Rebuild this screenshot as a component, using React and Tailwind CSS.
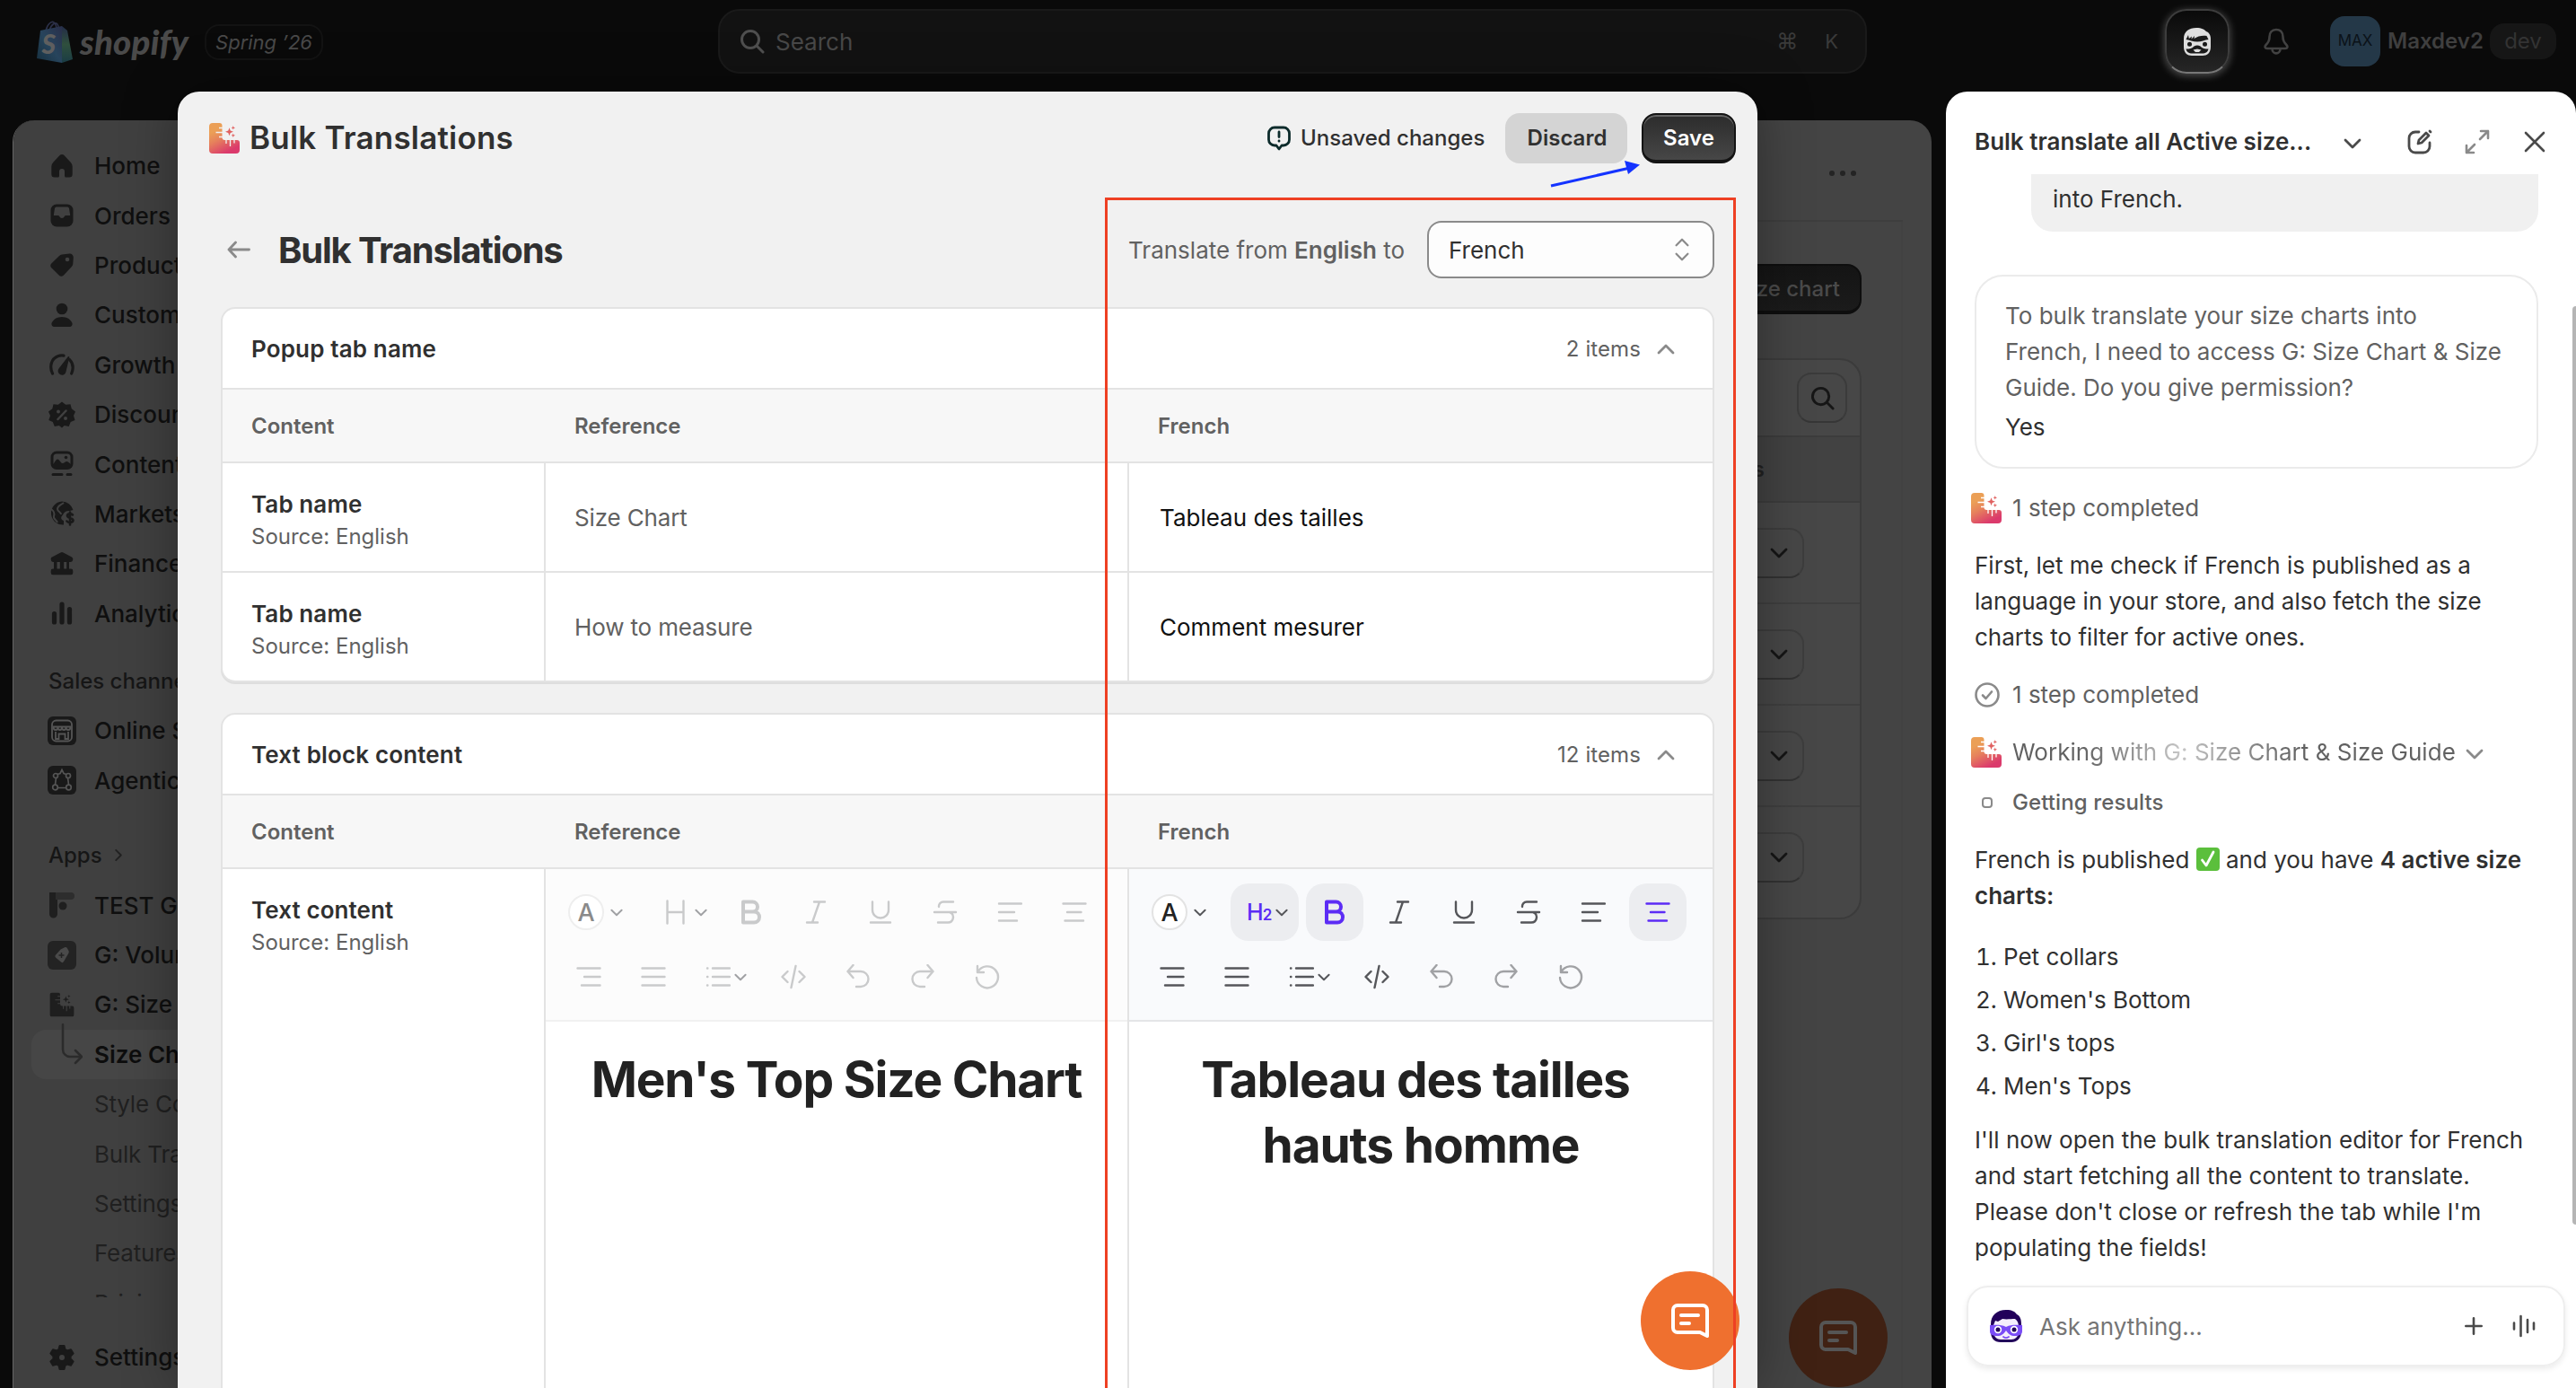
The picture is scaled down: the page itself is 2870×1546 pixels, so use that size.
import React from 'react';

const navItems = [
  { label: 'Home', icon: 'home' },
  { label: 'Orders', icon: 'orders' },
  { label: 'Products', icon: 'tag' },
  { label: 'Customers', icon: 'person' },
  { label: 'Growth', icon: 'gauge' },
  { label: 'Discounts', icon: 'discount' },
  { label: 'Content', icon: 'content' },
  { label: 'Markets', icon: 'globe' },
  { label: 'Finance', icon: 'bank' },
  { label: 'Analytics', icon: 'bars' },
];

const subItems = ['Style Config', 'Bulk Translations', 'Settings', 'Features', 'Pricing'];

const tabRows = [
  { reference: 'Size Chart', french: 'Tableau des tailles' },
  { reference: 'How to measure', french: 'Comment mesurer' },
];

const charts = ['Pet collars', "Women's Bottom", "Girl's tops", "Men's Tops"];

const NavIcon = ({ name }) => {
  const fill = '#191919';
  const bg = '#404040';
  return (
    <svg viewBox="0 0 32 32" className="w-8 h-8 shrink-0">
      {name === 'home' && (
        <path fill={fill} d="M16 3c-1 0-2 .4-2.700 1.200l-7 7.500A7 7 0 0 0 4.300 16.500V25a3.500 3.500 0 0 0 3.500 3.500H11.500a1.500 1.500 0 0 0 1.500-1.500v-5a3 3 0 0 1 6 0v5a1.500 1.500 0 0 0 1.500 1.500h3.700a3.500 3.500 0 0 0 3.500-3.500v-8.500a7 7 0 0 0-2-4.800l-7-7.500A3.700 3.700 0 0 0 16 3z" />
      )}
      {name === 'orders' && (
        <>
          <rect x="3.500" y="3.500" width="25" height="25" rx="6.500" fill={fill} />
          <path fill={bg} d="M10 6.500h12a2 2 0 0 1 2 1.500l1.200 8h-4.700a2 2 0 0 0-1.800 1.200 3 3 0 0 1-5.400 0A2 2 0 0 0 11.500 16H6.800L8 8a2 2 0 0 1 2-1.500z" />
        </>
      )}
      {name === 'tag' && (
        <>
          <path fill={fill} d="M16 4.500 24.500 3.500a4 4 0 0 1 4.300 4.200L28.300 15a5 5 0 0 1-1.400 3L18 27.500a3.800 3.800 0 0 1-5.400 0L4.500 19.500a3.800 3.800 0 0 1 0-5.300L13 6a5 5 0 0 1 3-1.500z" />
          <circle cx="22" cy="10" r="2.300" fill={bg} />
        </>
      )}
      {name === 'person' && (
        <>
          <circle cx="16" cy="9" r="6.300" fill={fill} />
          <path fill={fill} d="M16 18c-5.500 0-9.500 2.800-11.300 6.500C3.700 26.600 5.200 29 7.500 29h17c2.300 0 3.800-2.400 2.800-4.500C25.500 20.800 21.500 18 16 18z" />
        </>
      )}
      {name === 'gauge' && (
        <>
          <path fill="none" stroke={fill} strokeWidth="3.200" strokeLinecap="round" d="M5.500 26C2 19 3.500 9.500 12 6.500c2-.7 4-.8 6-.4M24.500 10.500c4 4.200 4.500 10 2.200 15.500" />
          <path fill={fill} d="M22.500 7.500c.5-1 2-.6 1.800.6L20.500 24a4.500 4.500 0 1 1-8-3.500z" />
        </>
      )}
      {name === 'discount' && (
        <>
          <path fill={fill} d="M16 1.500l4.200 3.200 5.300-.4 1.300 5L31 12.500 29 17l1.500 5-4.800 2-2 5-5-1L16 30.500 12.800 28l-5 1-2-5-4.500-2L3 17 1 12.500l4.300-3.200 1.200-5 5.300.4z" />
          <path stroke={bg} strokeWidth="2.500" strokeLinecap="round" d="M20.500 11.500l-9 9.500" />
          <circle cx="12" cy="12.500" r="2" fill={bg} />
          <circle cx="20" cy="20" r="2" fill={bg} />
        </>
      )}
      {name === 'content' && (
        <>
          <rect x="5" y="3" width="22" height="17.500" rx="5" fill="none" stroke={fill} strokeWidth="3" />
          <path fill={fill} d="M5 17c3-2 4-6.500 6-6.500 2.500 0 3.500 4.500 5.500 4.500s3-2 5-2 4 3 5.500 4v3H6z" />
          <circle cx="20.500" cy="8.500" r="1.800" fill={fill} />
          <path stroke={fill} strokeWidth="3" strokeLinecap="round" d="M6 27.500h10M22 27.500h4" />
        </>
      )}
      {name === 'globe' && (
        <>
          <path fill={fill} d="M16 2.500A13 13 0 1 0 18 28.500V24c-3-1-4-4-1-6.500 1-3 4-5 8-4.500l3.500-1A13 13 0 0 0 16 2.500z" />
          <path fill="none" stroke={bg} strokeWidth="2" d="M18 4c-4 3-7 3-7 7 0 3 4 3 4 6M4 11c3 2 4 5 3 8s3 4 4 7" />
          <path fill="none" stroke={fill} strokeWidth="2.600" strokeLinecap="round" d="M28 17.500c-1-1.500-6-1.800-6 1s6.500 2 6.500 5-6 3-7 1M25 14.500v14" />
        </>
      )}
      {name === 'bank' && (
        <path fill={fill} d="M14.500 3.500a3 3 0 0 1 3 0l9.500 5a2.500 2.500 0 0 1 1.300 2.200c0 2-1.300 3.300-3 3.300H24v7.500h2a2.300 2.300 0 0 1 2.300 2.300V26a2.300 2.300 0 0 1-2.300 2.300H6A2.300 2.300 0 0 1 3.700 26v-2.200A2.300 2.300 0 0 1 6 21.500h1V14h-.5c-1.700 0-2.800-1.300-2.800-3.300 0-1 .4-1.800 1.300-2.200zM10.500 14v7.500h3.300V14zm7.700 0v7.500h3V14z" />
      )}
      {name === 'bars' && (
        <path stroke={fill} strokeWidth="5.200" strokeLinecap="round" d="M7.500 16.500v9.500M16 6v20M24.500 11.500v14.500" />
      )}
      {name === 'store' && (
        <>
          <rect x="0" y="0" width="32" height="32" rx="6" fill={fill} />
          <rect x="5" y="4.500" width="22" height="23" rx="4.500" fill="none" stroke="#555" strokeWidth="1.800" />
          <path fill="none" stroke="#555" strokeWidth="1.800" d="M6 11.500h20M6.500 12c0 4 5 4 5 0 0 4 4.500 4 4.500 0 0 4 4.500 4 4.500 0 0 4 5 4 5 0M9 17v8h3.500v-5.500h7V25H23v-8" />
        </>
      )}
      {name === 'agent' && (
        <>
          <rect x="0" y="0" width="32" height="32" rx="6" fill={fill} />
          <path fill="none" stroke="#555" strokeWidth="1.700" d="M11 9.500l3-1 2-4 2 4 3 1M9.500 13l-1 8M22.500 13l1 8M11 24.500h10" />
          <g fill={fill} stroke="#555" strokeWidth="1.700">
            <circle cx="9" cy="11" r="2.500" />
            <circle cx="23" cy="11" r="2.500" />
            <circle cx="8.500" cy="24" r="2.800" />
            <circle cx="23.500" cy="24" r="2.800" />
          </g>
        </>
      )}
      {name === 'test' && (
        <>
          <path fill="#1f1f1f" d="M2 2h9v24a4 4 0 0 1-9 0z" />
          <path fill="#2d2d2d" d="M9 2h17a4 4 0 0 1 0 8H9z" />
          <circle cx="17" cy="17" r="4.500" fill="#1f1f1f" />
        </>
      )}
      {name === 'volume' && (
        <>
          <rect x="0" y="0" width="32" height="32" rx="6" fill="#232323" />
          <path fill="#4a4a4a" d="M14.500 9.500l5-2.500a2 2 0 0 1 2 .5l2 3.500a3 3 0 0 1 0 2.500L18 23a2 2 0 0 1-3 .5l-6-5a2 2 0 0 1-.3-2.500z" />
          <path stroke="#232323" strokeWidth="1.500" d="M15.500 13v6M12.500 16h6" />
        </>
      )}
      {name === 'gear' && (
        <>
          <path fill={fill} d="M13.500 3h5l1 4 2.500 1.400 4-1.200 2.600 4.400-3 3v2.800l3 3-2.600 4.400-4-1.200L19.500 25l-1 4h-5l-1-4L10 23.600l-4 1.200-2.600-4.400 3-3v-2.800l-3-3L6 7.200l4 1.200L12.500 7z" stroke={fill} strokeWidth="2" strokeLinejoin="round" />
          <circle cx="16" cy="16" r="3" fill={bg} />
        </>
      )}
    </svg>
  );
};

const AppIcon = ({ dim, tick = '#fff' }) => (
  <svg viewBox="0 0 34 34" className="w-[34px] h-[34px] shrink-0">
    <defs>
      <linearGradient id="appGrad" x1="0.300" y1="0.200" x2="0.700" y2="1">
        <stop offset="0" stopColor="#eb9f56" />
        <stop offset="0.350" stopColor="#e6815c" />
        <stop offset="0.900" stopColor="#db3a6c" />
      </linearGradient>
    </defs>
    <path
      fill={dim ? '#1e1e1e' : 'url(#appGrad)'}
      d="M4 0h7.500A3 3 0 0 1 14.500 3V16a3 3 0 0 0 3 3H31a3 3 0 0 1 3 3v8a4 4 0 0 1-4 4H4a4 4 0 0 1-4-4V4a4 4 0 0 1 4-4z"
    />
    <path stroke={tick} strokeWidth="1.300" d="M11 5.500h5M7.500 10.500h8M11 15.500h4M19 18v5M23.500 18v8M28 18v4.500" />
    <path
      fill={dim ? '#1e1e1e' : '#e0605f'}
      d="M22.500 5.200l1.200 3.300 3.300 1.200-3.300 1.200-1.200 3.300-1.200-3.300L18 9.700l3.300-1.200zM26.800 3l.6 1.700 1.700.6-1.700.6-.6 1.700-.6-1.700-1.700-.6 1.700-.6zM26.800 11.500l.6 1.700 1.700.6-1.700.6-.6 1.700-.6-1.700-1.700-.6 1.700-.6z"
    />
  </svg>
);

const Chevron = ({ dir = 'down', className }) => (
  <svg viewBox="0 0 20 12" className={className} fill="none" stroke="currentColor" strokeWidth="2.800" strokeLinecap="round" strokeLinejoin="round">
    <path d={dir === 'up' ? 'M2 10l8-8 8 8' : 'M2 2l8 8 8-8'} />
  </svg>
);

const SearchIcon = ({ className }) => (
  <svg viewBox="0 0 28 28" className={className} fill="none" stroke="currentColor" strokeWidth="3" strokeLinecap="round">
    <circle cx="12" cy="12" r="9.500" />
    <path d="M19 19l7 7" />
  </svg>
);

const ChatBubbleIcon = () => (
  <svg viewBox="0 0 44 40" className="w-11 h-10" fill="none" stroke="currentColor" strokeWidth="4" strokeLinejoin="round" strokeLinecap="round">
    <path d="M41 37V8a5 5 0 0 0-5-5H8a5 5 0 0 0-5 5v20a5 5 0 0 0 5 5h25z" />
    <path d="M12 14h19M12 23h9" />
  </svg>
);

const ToolIcon = ({ name }) => {
  const paths = {
    bold: 'M5 2.500h10.500a5.500 5.500 0 0 1 0 11H5zM5 13.500h12a6 6 0 0 1 0 12H5z',
    italic: 'M12 2.500h12M4 25.500h12M18 2.500L10 25.500',
    underline: 'M5 2.500v9a9 9 0 0 0 18 0v-9M3 25.500h22',
    strike: 'M23 2.500H12a5 5 0 0 0-5 5.500M2 14h24M19 14c6 2 5 11.500-2 11.500H6',
    left: 'M2 4.500h25M2 14h17M2 23.500h20',
    center: 'M1.500 4.500h25M6 14h15.500M3.500 23.500h20.500',
    right: 'M1.500 4.500h25M9 14h17.500M6 23.500h20.500',
    justify: 'M1.500 4.500h25M1.500 14h25M1.500 23.500h25',
    list: 'M8 4.500h19M8 14h19M8 23.500h19M2 4.500h.4M2 14h.4M2 23.500h.4',
    code: 'M7.500 8l-6 6 6 6M20.500 8l6 6-6 6M16.500 2L11.500 26',
    undo: 'M8.500 1L2.500 8l6 7M2.500 8h14.500a8.500 8.500 0 0 1 0 17H12',
    redo: 'M19.500 1l6 7-6 7M25.500 8H11a8.500 8.500 0 0 0 0 17h5',
    reset: 'M3 2v7h7M3.500 8.500A12 12 0 1 1 2 15',
    heading: 'M4.500 1.500v25M22.500 1.500v25M4.500 14h18',
  };
  return (
    <svg viewBox="0 0 28 28" className="w-7 h-7" fill="none" stroke="currentColor" strokeWidth={name === 'bold' ? 4 : 2.400} strokeLinecap="round" strokeLinejoin="round">
      <path d={paths[name]} />
    </svg>
  );
};

const ToolButton = ({ name, active, faded }) => (
  <div
    className={`w-16 h-16 rounded-[20px] flex items-center justify-center ${active ? 'bg-[#ecedf0] text-[#5c2cf5]' : ''} ${faded ? 'text-[#a0a1a4]' : ''}`}
  >
    <ToolIcon name={name} />
  </div>
);

const Toolbar = ({ active }) => (
  <div
    className={`h-[170px] border-b-2 p-4 flex flex-col gap-2 ${
      active ? 'bg-[#f9fafc] border-[#e4e5e7] text-[#55565a]' : 'bg-[#fcfcfc] border-[#f1f1f1] text-[#c9cacb]'
    }`}
  >
    <div className="flex gap-2">
      <div className="w-[89px] h-16 pl-[9px] flex items-center gap-[7px]">
        <div className={`w-10 h-10 rounded-full border-2 bg-white flex items-center justify-center font-medium text-[27px] leading-none ${active ? 'border-[#e3e3e3] text-[#222]' : 'border-[#eee] text-[#8a8a8a]'}`}>
          A
        </div>
        <Chevron className={active ? 'w-[14px] h-[9px] text-[#55565a]' : 'w-[14px] h-[9px] text-[#a0a1a4]'} />
      </div>
      {active ? (
        <div className="w-[76px] h-16 rounded-[20px] bg-[#ecedf0] text-[#5c2cf5] flex items-center pl-[18px]">
          <span className="text-[25px] font-medium leading-none tracking-[-1px]">H</span>
          <span className="text-[17px] font-semibold leading-none pt-[6px]">2</span>
          <Chevron className="w-[14px] h-[9px] ml-[4px] text-[#55565a]" />
        </div>
      ) : (
        <div className="w-[76px] h-16 flex items-center pl-[18px] gap-[7px]">
          <ToolIcon name="heading" />
          <Chevron className="w-[14px] h-[9px] text-[#a0a1a4]" />
        </div>
      )}
      <ToolButton name="bold" active={active} />
      <ToolButton name="italic" />
      <ToolButton name="underline" />
      <ToolButton name="strike" />
      <ToolButton name="left" />
      <ToolButton name="center" active={active} />
    </div>
    <div className="flex gap-2">
      <ToolButton name="right" />
      <ToolButton name="justify" />
      <div className="w-[76px] h-16 flex items-center gap-1 pl-[18px]">
        <ToolIcon name="list" />
        <Chevron className={active ? 'w-[14px] h-[9px]' : 'w-[14px] h-[9px] text-[#a0a1a4]'} />
      </div>
      <ToolButton name="code" />
      <ToolButton name="undo" faded={active} />
      <ToolButton name="redo" faded={active} />
      <ToolButton name="reset" faded={active} />
    </div>
  </div>
);

const NavRow = ({ icon, label, children }) => (
  <div className="h-[55.400px] shrink-0 flex items-center pl-[18px] gap-5 text-[26px] font-medium text-[#0f0f0f] whitespace-nowrap">
    {children || <NavIcon name={icon} />}
    {label}
  </div>
);

const Sidebar = () => (
  <div className="w-[480px] shrink-0 bg-[#404040] px-5 flex flex-col">
    <div className="h-[1311px] pt-[23px] overflow-hidden">
      {navItems.map((item) => (
        <NavRow key={item.label} icon={item.icon} label={item.label} />
      ))}
      <div className="h-[55.400px] mt-5 pl-[19px] flex items-center text-[24px] font-medium text-[#161616]">Sales channels</div>
      <NavRow icon="store" label="Online Store" />
      <NavRow icon="agent" label="Agentic" />
      <div className="h-[55.400px] mt-7 pl-[19px] flex items-center gap-[11px] text-[24px] font-medium text-[#161616]">
        Apps
        <Chevron className="w-[14px] h-[9px] -rotate-90 text-[#222]" />
      </div>
      <NavRow icon="test" label="TEST G" />
      <NavRow icon="volume" label="G: Volume Discount" />
      <NavRow label="G: Size Chart">
        <span className="w-8 flex justify-center">
          <span className="scale-[0.8]"><AppIcon dim tick="#404040" /></span>
        </span>
      </NavRow>
      <div className="h-[55.400px] bg-[#464646] rounded-2xl flex items-center text-[26px] font-semibold text-[#0d0d0d] pl-[33px] gap-[13px]">
        <svg viewBox="0 0 24 46" className="w-6 h-[46px] -mt-[25px] -mb-[2px]" fill="none" stroke="#2b2b2b" strokeWidth="2.500" strokeLinecap="round" strokeLinejoin="round">
          <path d="M2 1v28a8 8 0 0 0 8 8h12M16 30l7 7-7 7" />
        </svg>
        Size Chart
      </div>
      {subItems.map((label) => (
        <div key={label} className="h-[55.400px] pl-[70px] flex items-center text-[26px] tracking-[-0.200px] text-[#202020] whitespace-nowrap">
          {label}
        </div>
      ))}
    </div>
    <div className="pt-[39px]">
      <NavRow icon="gear" label="Settings" />
    </div>
  </div>
);

const TopBar = () => (
  <div className="h-[134px] shrink-0 flex items-start">
    <div className="flex items-center h-[92px] pl-[41px] w-[800px]">
      <svg viewBox="0 0 40 47" className="w-10 h-[47px]">
        <defs>
          <linearGradient id="bag" x1="0" y1="1" x2="1" y2="0">
            <stop offset="0" stopColor="#16303f" />
            <stop offset="0.500" stopColor="#27445c" />
            <stop offset="1" stopColor="#2a2f4a" />
          </linearGradient>
          <linearGradient id="bagSide" x1="0" y1="0" x2="0" y2="1">
            <stop offset="0" stopColor="#232c48" />
            <stop offset="0.500" stopColor="#2f4f3d" />
            <stop offset="1" stopColor="#1a3c45" />
          </linearGradient>
        </defs>
        <path fill="none" stroke="#2c3048" strokeWidth="1.600" d="M10 11C12 3 17 0 19 2c2 1.500 3 5 3 8M14 11c2-7 7-10 9-7 1.500 2 1.500 4 1.500 6" />
        <path fill="url(#bag)" d="M4 11l24-5v41L0 42z" />
        <path fill="url(#bagSide)" d="M28 6l6 5 6 32-12 4z" />
        <text x="5.500" y="37" fontSize="30" fontWeight="900" fontStyle="italic" fontFamily="Lato, sans-serif" fill="#5f5f5f">S</text>
      </svg>
      <div className="ml-2 w-[123px] text-[38.500px] leading-[46px] font-black italic text-[#4a4a4a] font-[Lato,sans-serif] tracking-[0.200px]">shopify</div>
      <div className="ml-[16px] mt-[2px] w-[132px] h-10 rounded-[16px] border-2 border-[#131313] flex items-center justify-center italic text-[22px] text-[#494949]">
        Spring ’26
      </div>
    </div>
    <div className="w-[1280px] h-[72px] mt-[10px] rounded-[24px] bg-[#121212] border-2 border-[#1a1a1a] flex items-center pl-[22px] pr-[30px] text-[26px] text-[#484848]">
      <SearchIcon className="w-7 h-7 text-[#4f4f4f]" />
      <span className="ml-[12px] flex-1">Search</span>
      <span className="text-[24px] text-[#3a3a3a]">⌘</span>
      <span className="text-[22px] text-[#3a3a3a] ml-[30px]">K</span>
    </div>
    <div className="flex-1 flex items-center h-[92px] pl-[332px]">
      <div className="w-[72px] h-[72px] rounded-[24px] border-2 border-[#3d3d3d] border-b-[#777] bg-linear-to-b from-[#0a0a0a] to-[#262626] flex items-center justify-center shadow-[0_2px_10px_rgba(255,255,255,0.300)]">
        <svg viewBox="0 0 30 31" className="w-[30px] h-[31px]">
          <path fill="#dedede" d="M0 12C0 4 6 0 14 0c6 0 9 2 11 4 3 1 5 4 5 8v9c0 7-4 10-9 10H9c-5 0-9-3-9-10z" />
          <path fill="#1a1a1a" d="M2.500 13l2.500-5 .8 4L9 9.500l-.5 3L12 9l-.5 3c4-3 10-4 14-3l2 4c-4 .5-8 2.500-12.500 2.500S6 13.500 2.500 13z" />
          <path fill="#1a1a1a" d="M2.500 23.500c4 0 7-.5 9-3 2.500-1.300 4.500-1.300 7 0 2 2.500 5 3 9 3-.5 3-3 5-7 5h-11c-4 0-6.500-2-7-5z" />
          <circle cx="6.500" cy="18.300" r="2.500" fill="#1a1a1a" />
          <circle cx="23.500" cy="18.300" r="2.500" fill="#1a1a1a" />
          <path fill="#dedede" d="M10.500 24.500l4.500-1 4.500 1-2.500 2.500h-4z" />
        </svg>
      </div>
      <svg viewBox="0 0 28 30" className="w-7 h-[30px] ml-[38px]" fill="none" stroke="#424242" strokeWidth="2.600" strokeLinejoin="round">
        <path d="M14 2C9 2 6.500 5.500 6.500 10c0 4-1 6-3.500 8.500C.5 21 1.500 23 4 23h20c2.500 0 3.500-2 1-4.500C22.500 16 21.500 14 21.500 10 21.500 5.500 19 2 14 2zM9.500 23.500c0 6.500 9 6.500 9 0" />
      </svg>
      <div className="ml-[46px] shrink-0 w-14 h-14 rounded-2xl bg-[#243848] text-[#0b1218] text-[17px] flex items-center justify-center">MAX</div>
      <div className="ml-[8px] shrink-0 text-[24px] font-semibold text-[#3f3f3f] w-[108px]">Maxdev2</div>
      <div className="ml-[6px] shrink-0 w-[74px] h-10 rounded-2xl bg-[#161616] text-[#333] text-[24px] flex items-center justify-center">dev</div>
    </div>
  </div>
);

const PageBehind = () => (
  <div className="flex-1 bg-[#444]">
    <div className="mr-8 h-[113px] border-b-2 border-[#3e3e3e] flex items-center justify-end gap-[6px] pr-[52px] pt-[6px]">
      <span className="w-[6px] h-[6px] rounded-full bg-[#242424]" />
      <span className="w-[6px] h-[6px] rounded-full bg-[#242424]" />
      <span className="w-[6px] h-[6px] rounded-full bg-[#242424]" />
    </div>
    <div className="mr-8 border-r-2 border-[#424242] pr-[44px] pt-[47px] h-full">
      <div className="flex justify-end">
        <div className="h-14 w-[260px] rounded-2xl border-2 border-[#0e0e0e] border-b-4 bg-linear-to-b from-[#141414] to-[#1b1b1b] flex items-center justify-end pr-[22px] pt-[2px] text-[24px] font-medium text-[#4a4a4a]">
          Create size chart
        </div>
      </div>
      <div className="mt-[49px] rounded-[24px] border-2 border-[#3b3b3b] bg-[#474747]">
        <div className="h-[84px] flex items-center justify-end pr-[14px]">
          <div className="w-14 h-14 rounded-2xl border-2 border-[#3b3b3b] border-b-[#363636] flex items-center justify-center text-[#161616]">
            <SearchIcon className="w-[27px] h-[27px]" />
          </div>
        </div>
        <div className="h-[75px] border-y-2 border-[#3c3c3c] bg-[#424242] flex items-center justify-end pr-[106px] text-[24px] font-semibold text-[#222]">
          Actions
        </div>
        {[0, 1, 2, 3].map((row) => (
          <div key={row} className={row < 3 ? 'h-[113px] border-b-2 border-[#3f3f3f] flex items-center justify-end pr-[62px]' : 'h-[123px] flex items-start pt-[28px] justify-end pr-[62px]'}>
            <div className="w-[160px] h-14 rounded-2xl border-2 border-[#3d3d3d] border-b-[#323232] flex items-center justify-end pr-[16px] text-[#151515]">
              <Chevron className="w-5 h-3" />
            </div>
          </div>
        ))}
      </div>
    </div>
  </div>
);

const CardHeader = ({ title, count }) => (
  <>
    <div className="h-[90px] border-b-2 border-[#e3e3e3] flex items-center justify-between pl-8 pr-[42px]">
      <h3 className="text-[26px] font-semibold text-[#303030] tracking-[0.150px]">{title}</h3>
      <div className="flex items-center text-[24px] text-[#616161] gap-[18px] pt-px tracking-[0.100px]">
        {count} items
        <Chevron dir="up" className="w-5 h-3 text-[#8a8a8a]" />
      </div>
    </div>
    <div className="h-[82px] pt-[2px] border-b-2 border-[#e3e3e3] bg-[#f7f7f7] grid grid-cols-[360px_650px_650px] items-center text-[24px] font-semibold text-[#616161]">
      <div className="pl-8">Content</div>
      <div className="pl-8">Reference</div>
      <div className="pl-8">French</div>
    </div>
  </>
);

const SourceCell = ({ title }) => (
  <div className="pl-8 pt-[26px] border-r-2 border-[#e3e3e3]">
    <div className="text-[26px] leading-10 font-semibold text-[#303030] tracking-[0.100px]">{title}</div>
    <div className="text-[24px] leading-8 text-[#616161]">Source: English</div>
  </div>
);

const Modal = () => (
  <div className="absolute left-[198px] top-[102px] w-[1760px] h-[1444px] rounded-t-[24px] bg-[#f1f1f1] overflow-hidden shadow-[0_0_60px_rgba(0,0,0,0.350)]">
    {/* Title bar */}
    <div className="h-[104px] flex items-center pl-[35px] pr-6">
      <AppIcon tick="#f1f1f1" />
      <h1 className="ml-[11px] flex-1 text-[35px] font-semibold text-[#303030] tracking-[0.200px] -mt-[2px]">Bulk Translations</h1>
      <svg viewBox="0 0 26 28" className="w-[26px] h-7" fill="none" stroke="#0c2b2b" strokeWidth="2.800" strokeLinecap="round" strokeLinejoin="round">
        <path d="M8 2h10a6.500 6.500 0 0 1 6.500 6.500v7A6.500 6.500 0 0 1 18 22h-2l-3 4-3-4H8a6.500 6.500 0 0 1-6.500-6.500v-7A6.500 6.500 0 0 1 8 2zM13 7v5.500M13 17v.2" />
      </svg>
      <span className="ml-[11px] w-[204px] text-[24px] font-medium text-[#303030] whitespace-nowrap">Unsaved changes</span>
      <button className="ml-[24px] w-[136px] h-14 rounded-2xl bg-[#d4d4d4] text-[24px] font-semibold text-[#303030] pl-[2px]">Discard</button>
      <button className="ml-4 w-[105px] h-14 rounded-2xl border-2 border-[#141414] border-b-4 bg-linear-to-b from-[#2c2c2c] to-[#474747] shadow-[inset_0_2px_0_#666] text-[24px] font-semibold text-white pt-[2px]">Save</button>
    </div>

    <div className="px-12 pt-10">
      <div className="h-16 flex items-center">
        <svg viewBox="0 0 26 20" className="w-[26px] h-5 ml-[7px]" fill="none" stroke="#8a8a8a" strokeWidth="2.800" strokeLinecap="round" strokeLinejoin="round">
          <path d="M9.500 2L2 10l7.500 8M2 10h22.500" />
        </svg>
        <h2 className="ml-[31px] flex-1 text-[40px] font-bold text-[#303030] tracking-[-1.200px] pt-px">Bulk Translations</h2>
        <span className="text-[26px] text-[#616161] pr-px">
          Translate from <span className="font-semibold">English</span> to
        </span>
        <div className="ml-6 w-[320px] h-16 rounded-2xl border-2 border-[#8a8a8a] bg-[#fdfdfd] flex items-center justify-between pl-[22px] pr-[26px] text-[26px] text-[#303030]">
          French
          <span className="flex flex-col gap-[6px] text-[#8a8a8a]">
            <Chevron dir="up" className="w-4 h-[10px]" />
            <Chevron className="w-4 h-[10px]" />
          </span>
        </div>
      </div>

      {/* Popup tab name */}
      <div className="mt-8 border-2 border-[#e3e3e3] rounded-2xl bg-white overflow-hidden shadow-[0_2px_0_#dedede]">
        <CardHeader title="Popup tab name" count={2} />
        {tabRows.map((row, index) => (
          <div key={index} className={`grid grid-cols-[360px_650px_650px] ${index === 0 ? 'h-[122px] border-b-2 border-[#e3e3e3]' : 'h-[120px]'}`}>
            <SourceCell title="Tab name" />
            <div className="pl-8 flex items-center text-[26px] text-[#616161] tracking-[-0.150px] border-r-2 border-[#e3e3e3]">{row.reference}</div>
            <div className="pl-[34px] flex items-center text-[26px] text-[#111]">{row.french}</div>
          </div>
        ))}
      </div>

      {/* Text block content */}
      <div className="mt-[34px] border-2 border-[#e3e3e3] rounded-t-2xl bg-white overflow-hidden">
        <CardHeader title="Text block content" count={12} />
        <div className="grid grid-cols-[360px_650px_650px] h-[700px]">
          <SourceCell title="Text content" />
          <div className="border-r-2 border-[#e3e3e3]">
            <Toolbar />
            <div className="pt-[28px] text-center text-[55px] leading-[73px] font-bold text-[#222] tracking-[-1.200px]">Men's Top Size Chart</div>
          </div>
          <div>
            <Toolbar active />
            <div className="pt-[28px] text-center text-[55px] leading-[73px] font-bold text-[#222] tracking-[-1.100px]">
              <span className="pr-3">Tableau des tailles</span>
              <br />
              hauts homme
            </div>
          </div>
        </div>
      </div>
    </div>
  </div>
);

const StepRow = ({ children }) => (
  <div className="mt-6 h-10 -ml-1 flex items-center text-[26px] text-[#616161]">{children}</div>
);

const ChatPanel = () => (
  <div className="absolute left-[2168px] top-[102px] w-[702px] h-[1444px] rounded-t-[24px] bg-white overflow-hidden text-[26px] leading-10 text-[#303030]">
    <div className="h-[92px] pt-5 pl-8 pr-[34px] flex items-center text-[#4a4a4a]">
      <span className="w-[411px] text-[26px] font-semibold text-[#303030] whitespace-nowrap">Bulk translate all Active size...</span>
      <Chevron className="w-5 h-3 mt-1" />
      <svg viewBox="0 0 28 28" className="w-7 h-7 ml-[51px]" fill="none" stroke="currentColor" strokeWidth="2.800" strokeLinecap="round" strokeLinejoin="round">
        <path d="M13 3H9a7 7 0 0 0-7 7v9a7 7 0 0 0 7 7h9a7 7 0 0 0 7-7v-4M12 16l1-4 8-8 3 3-8 8z" />
        <path d="M25 2l1 1" />
      </svg>
      <svg viewBox="0 0 28 28" className="w-7 h-7 ml-[36px] text-[#8a8a8a]" fill="none" stroke="currentColor" strokeWidth="2.600" strokeLinecap="round" strokeLinejoin="round">
        <path d="M18 2h8v8M26 2l-9 9M10 26H2v-8M2 26l9-9" />
      </svg>
      <svg viewBox="0 0 24 24" className="w-6 h-6 ml-[38px]" fill="none" stroke="currentColor" strokeWidth="2.600" strokeLinecap="round">
        <path d="M2 2l20 20M22 2L2 22" />
      </svg>
    </div>

    <div className="pl-8 pr-[42px]">
      <div className="ml-[63px] h-16 rounded-b-[24px] bg-[#f0f0f0] pl-6 pt-2">into French.</div>

      <div className="mt-12 h-[216px] rounded-[32px] border-2 border-[#ebebeb] pl-8 pt-6 text-[#616161] whitespace-nowrap">
        To bulk translate your size charts into
        <br />
        French, I need to access G: Size Chart &amp; Size
        <br />
        Guide. Do you give permission?
        <div className="mt-1 text-[#303030]">Yes</div>
      </div>

      <StepRow>
        <AppIcon />
        <span className="ml-3">1 step completed</span>
      </StepRow>

      <p className="mt-6 whitespace-nowrap">
        First, let me check if French is published as a
        <br />
        language in your store, and also fetch the size
        <br />
        charts to filter for active ones.
      </p>

      <StepRow>
        <svg viewBox="0 0 28 28" className="w-7 h-7 ml-[4px]" fill="none" stroke="#8a8a8a" strokeWidth="2.600" strokeLinecap="round" strokeLinejoin="round">
          <circle cx="14" cy="14" r="12.500" />
          <path d="M9 14.500l3.500 3.500L19 10.500" />
        </svg>
        <span className="ml-[14px]">1 step completed</span>
      </StepRow>

      <StepRow>
        <AppIcon />
        <span className="ml-3 tracking-[0.040px] bg-linear-to-r from-[#616161] from-15% via-[#c6c6c6] via-38% to-[#616161] to-65% bg-clip-text text-transparent whitespace-nowrap">
          Working with G: Size Chart &amp; Size Guide
        </span>
        <Chevron className="w-5 h-3 ml-[11px] mt-1 text-[#8a8a8a]" />
      </StepRow>

      <div className="mt-4 h-10 flex items-center text-[24px] font-medium text-[#616161]">
        <span className="ml-[8px] w-3 h-3 rounded-[4px] border-2 border-[#8a8a8a]" />
        <span className="ml-[22px] tracking-[0.100px]">Getting results</span>
      </div>

      <p className="mt-6 whitespace-nowrap">
        French is published{' '}
        <svg viewBox="0 0 26 26" className="inline w-[26px] h-[26px] -mt-[5px]">
          <rect width="26" height="26" rx="4" fill="#5bbf3c" />
          <path d="M6.500 14l4.500 6L19 5" fill="none" stroke="#fff" strokeWidth="2.800" strokeLinecap="round" strokeLinejoin="round" />
        </svg>{' '}
        and you have <b className="font-semibold">4 active size</b>
        <br />
        <b className="font-semibold">charts:</b>
      </p>

      <ol className="mt-7 flex flex-col gap-2">
        {charts.map((chart, index) => (
          <li key={chart} className="pl-[1px] flex">
            <span className="w-[31px] tabular-nums tracking-[-0.200px]">{index + 1}.</span>
            {chart}
          </li>
        ))}
      </ol>

      <p className="mt-5 whitespace-nowrap tracking-[0.040px]">
        I'll now open the bulk translation editor for French
        <br />
        and start fetching all the content to translate.
        <br />
        Please don't close or refresh the tab while I'm
        <br />
        populating the fields!
      </p>
    </div>

    {/* Prompt box */}
    <div className="mt-[22px] ml-[23px] mr-[12px] h-[90px] rounded-[24px] border-2 border-[#eee] shadow-[0_3px_6px_rgba(0,0,0,0.080)] flex items-center pl-6 pr-[31px]">
      <svg viewBox="0 0 36 36" className="w-9 h-9">
        <path fill="#22005a" d="M1 16C1 6 8 0 18 0c7 0 10 2 12 5 4 2 5 6 5 11v8c0 8-5 12-11 12H12C5 36 1 32 1 24z" />
        <path fill="#f4eefc" d="M4 17l2-5 3 1 5-3c4 1 10 0 14 0 3 2 4 5 4 9v5c0 6-4 9-8 9H12c-4 0-8-3-8-9z" />
        <path fill="#7a4cf6" d="M0 17c6 0 12-1 18 2 6-3 12-2 18-2v7c0 4-4 5-8 5-5 0-7-2-10-6-3 4-5 6-10 6-4 0-8-1-8-5z" />
        <circle cx="9" cy="22" r="4.200" fill="#fff" />
        <circle cx="27" cy="22" r="4.200" fill="#fff" />
        <circle cx="9" cy="22" r="2.500" fill="#22005a" />
        <circle cx="27" cy="22" r="2.500" fill="#22005a" />
        <path d="M15 30c2 1.500 4 1.500 6 0" fill="none" stroke="#7a4cf6" strokeWidth="1.800" strokeLinecap="round" />
      </svg>
      <span className="ml-[19px] flex-1 text-[#757575] pt-px">Ask anything...</span>
      <svg viewBox="0 0 20 20" className="w-5 h-5" stroke="#4a4a4a" strokeWidth="2.600" strokeLinecap="round">
        <path d="M10 1.300v17.400M1.300 10h17.400" />
      </svg>
      <svg viewBox="0 0 26 26" className="w-[26px] h-[26px] ml-[33px]" stroke="#4a4a4a" strokeWidth="2.600" strokeLinecap="round">
        <path d="M2 9.500v7M9.500 2v22M17 6v14M24 9.500v7" />
      </svg>
    </div>

    <div className="absolute right-0 top-[239px] w-1 h-[1023px] rounded-l bg-[#b5b5b5]" />
  </div>
);

const App = () => {
  return (
    <div className="relative w-[2870px] h-[1546px] overflow-hidden bg-[#0a0a0a] font-[Inter,sans-serif] flex flex-col">
      <TopBar />
      <div className="ml-[14px] w-[2138px] flex-1 min-h-0 flex rounded-t-[24px] overflow-hidden border-l border-[#666]">
        <Sidebar />
        <PageBehind />
      </div>

      <div className="absolute left-[1993px] top-[1435px] w-[110px] h-[110px] rounded-full bg-[#402113] text-[#555] flex items-center justify-center">
        <ChatBubbleIcon />
      </div>

      <Modal />

      <div className="absolute left-[1828px] top-[1416px] w-[110px] h-[110px] rounded-full bg-[#ef702f] text-white flex items-center justify-center">
        <ChatBubbleIcon />
      </div>

      {/* Highlight frame and arrow */}
      <div className="absolute left-[1231px] top-[220px] w-[703px] h-[1400px] border-[3px] border-[#ee4023]" />
      <svg viewBox="0 0 102 32" className="absolute left-[1726px] top-[178px] w-[102px] h-8">
        <path d="M2 29L90 9" stroke="#1433ff" strokeWidth="3" />
        <path d="M84 1l17 4.500L88 16z" fill="#1433ff" />
      </svg>

      <ChatPanel />
    </div>
  );
};

export default App;
